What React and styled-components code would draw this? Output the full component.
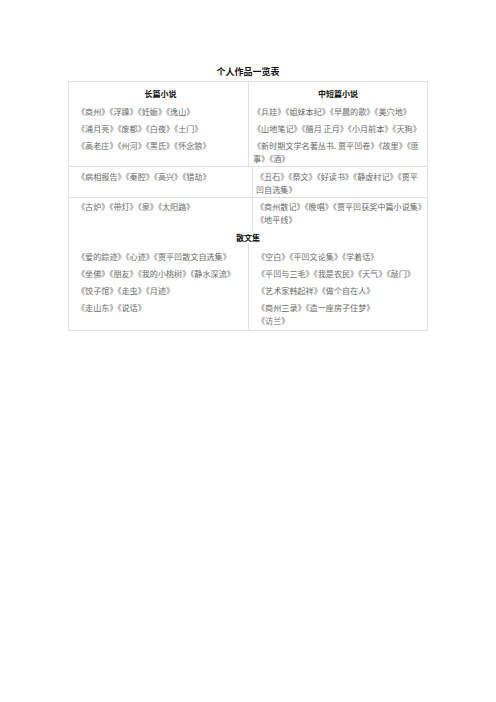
import React from 'react';
import styled, { createGlobalStyle } from 'styled-components';

const GlobalStyle = createGlobalStyle`
  body {
    margin: 0;
    background: #fff;
    font-family: "Noto Sans CJK SC", "Liberation Serif", serif;
  }
`;

const Page = styled.div`
  width: 360px;
  margin: 0 auto;
  padding-top: 66px;
`;

const Title = styled.h1`
  margin: 0 0 3px;
  font-size: 9px;
  line-height: 12px;
  font-weight: 700;
  color: #111;
  text-align: center;
`;

const Table = styled.div`
  border: 1px solid #e0e0e0;
`;

const Row = styled.div`
  display: grid;
  grid-template-columns: ${p => p.$left}px 1fr;
  border-top: ${p => (p.$ruled ? '1px solid #e0e0e0' : 'none')};
`;

const Cell = styled.div`
  padding: ${p => p.$pad};
  border-left: ${p => (p.$divider ? '1px solid #e0e0e0' : 'none')};
`;

const Heading = styled.div`
  font-size: 8px;
  line-height: 12px;
  font-weight: 700;
  color: #111;
  text-align: center;
  margin-bottom: ${p => p.$gap || 0}px;
  padding: ${p => p.$pad || 0};
`;

const Line = styled.p`
  margin: 0 0 4px;
  font-size: 8.1px;
  line-height: 13px;
  color: #6a6a6a;
  white-space: nowrap;
  &:last-child {
    margin-bottom: 0;
  }
`;

const novels = {
  long: ['《商州》《浮躁》《妊娠》《逸山》', '《浦月亮》《废都》《白夜》《土门》', '《高老庄》《州河》《黑氏》《怀念狼》'],
  short: [
    '《兵娃》《姐妹本纪》《早晨的歌》《美穴地》',
    '《山地笔记》《腊月 正月》《小月前本》《天狗》',
    ['《新时期文学名著丛书. 贾平凹卷》《故里》《匪', '事》《酒》'],
  ],
};

const rows = [
  { left: ['《病相报告》《秦腔》《高兴》《猎劫》'], right: [['《丑石》《祭文》《好读书》《静虚村记》《贾平', '凹自选集》']] },
  { left: ['《古炉》《带灯》《泉》《太阳路》'], right: [['《商州散记》《晚唱》《贾平凹获奖中篇小说集》', '《地平线》']] },
];

const prose = {
  left: ['《爱的踪迹》《心迹》《贾平凹散文自选集》', '《坐佛》《朋友》《我的小桃树》《静水深流》', '《饺子馆》《走虫》《月迹》', '《走山东》《说话》'],
  right: ['《空白》《平凹文论集》《学着话》', '《平凹与三毛》《我是农民》《天气》《敲门》', '《艺术家韩起祥》《做个自在人》', ['《商州三录》《造一座房子住梦》', '《访兰》']],
};

const renderLines = items =>
  items.map((item, i) => (
    <Line key={i}>
      {Array.isArray(item)
        ? item.map((part, j) => (
            <React.Fragment key={j}>
              {j > 0 && <br />}
              {part}
            </React.Fragment>
          ))
        : item}
    </Line>
  ));

export default function App() {
  return (
    <>
      <GlobalStyle />
      <Page>
        <Title>个人作品一览表</Title>
        <Table>
          <Row $left={179}>
            <Cell $pad="6px 4px 1px 8px">
              <Heading $gap={5}>长篇小说</Heading>
              {renderLines(novels.long)}
            </Cell>
            <Cell $divider $pad="6px 4px 1px 4px">
              <Heading $gap={5}>中短篇小说</Heading>
              {renderLines(novels.short)}
            </Cell>
          </Row>
          <Row $left={183} $ruled>
            <Cell $pad="3px 4px 1px 8px">{renderLines(rows[0].left)}</Cell>
            <Cell $divider $pad="3px 4px 1px 3px">{renderLines(rows[0].right)}</Cell>
          </Row>
          <Row $left={183} $ruled>
            <Cell $pad="2px 4px 4px 8px">{renderLines(rows[1].left)}</Cell>
            <Cell $divider $pad="2px 4px 4px 3px">{renderLines(rows[1].right)}</Cell>
          </Row>
          <Heading $pad="2px 0 0">散文集</Heading>
          <Row $left={179}>
            <Cell $pad="6px 4px 3px 8px">{renderLines(prose.left)}</Cell>
            <Cell $divider $pad="6px 4px 3px 8px">{renderLines(prose.right)}</Cell>
          </Row>
        </Table>
      </Page>
    </>
  );
}
